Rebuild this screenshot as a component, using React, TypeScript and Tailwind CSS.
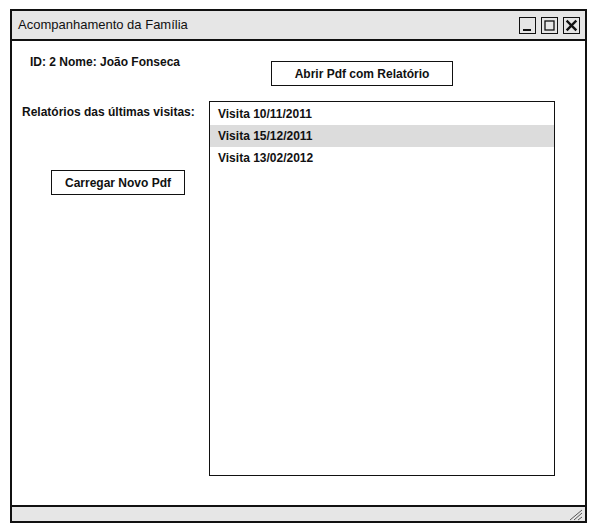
import React from "react";

const visits = ["Visita 10/11/2011", "Visita 15/12/2011", "Visita 13/02/2012"];

function WinButton({ kind }: { kind: "min" | "max" | "close" }) {
  return (
    <div className="flex size-[17px] items-center justify-center border-[1.5px] border-[#111] bg-[#e6e6e6]">
      <svg width="13" height="13" viewBox="0 0 13 13">
        {kind === "min" && (
          <line x1="2" y1="11" x2="10" y2="11" stroke="#111" strokeWidth="2" />
        )}
        {kind === "max" && (
          <rect x="2" y="2" width="9" height="9" fill="none" stroke="#111" strokeWidth="1.3" />
        )}
        {kind === "close" && (
          <g stroke="#111" strokeWidth="2.4" strokeLinecap="square">
            <line x1="2.5" y1="2.5" x2="10.5" y2="10.5" />
            <line x1="10.5" y1="2.5" x2="2.5" y2="10.5" />
          </g>
        )}
      </svg>
    </div>
  );
}

export default function App() {
  return (
    <div className="h-[526px] w-[590px] bg-white pl-[10px] pt-[9px] font-['Liberation_Sans',Arial,sans-serif] text-[#111]">
      <div className="flex h-[514px] w-[577px] flex-col border-2 border-[#111]">
        {/* title bar */}
        <div className="flex h-[30px] shrink-0 items-center justify-between border-b-2 border-[#111] bg-[#e6e6e6] pl-[6px] pr-[5px]">
          <span className="text-[13px]">Acompanhamento da Família</span>
          <div className="flex gap-[5px]">
            <WinButton kind="min" />
            <WinButton kind="max" />
            <WinButton kind="close" />
          </div>
        </div>

        {/* body */}
        <div className="flex flex-1 flex-col">
          <div className="flex h-[60px] shrink-0 items-start">
            <p className="mt-[12px] w-[259px] pl-[18px] text-[12px] font-bold">
              ID: 2 Nome: João Fonseca
            </p>
            <button
              type="button"
              className="mt-[20px] flex h-[25px] w-[182px] items-center justify-center border-[1.5px] border-[#111] bg-white text-[12px] font-bold"
            >
              Abrir Pdf com Relatório
            </button>
          </div>

          <div className="flex items-start">
            <div className="flex w-[197px] shrink-0 flex-col pl-[10px]">
              <p className="mt-[2px] text-[12px] font-bold">
                Relatórios das últimas visitas:
              </p>
              <button
                type="button"
                className="ml-[29px] mt-[49px] flex h-[25px] w-[134px] items-center justify-center border-[1.5px] border-[#111] bg-white text-[12px] font-bold"
              >
                Carregar Novo Pdf
              </button>
            </div>
            <ul className="h-[375px] w-[346px] border-[1.5px] border-[#111]">
              {visits.map((v, i) => (
                <li
                  key={v}
                  className={`flex items-center pl-[8px] text-[12px] font-bold ${
                    i === 0 ? "h-[23px]" : "h-[22px]"
                  } ${i === 1 ? "bg-[#dcdcdc]" : ""}`}
                >
                  {v}
                </li>
              ))}
            </ul>
          </div>
        </div>

        {/* status bar */}
        <div className="flex h-[16px] shrink-0 items-center justify-end border-t-2 border-[#111] bg-[#e6e6e6] pr-[2px]">
          <svg width="16" height="13" viewBox="0 0 16 13">
            <g stroke="#555" strokeWidth="1">
              <line x1="3" y1="12" x2="15" y2="2" />
              <line x1="7" y1="12" x2="15" y2="5" />
              <line x1="11" y1="12" x2="15" y2="9" />
            </g>
          </svg>
        </div>
      </div>
    </div>
  );
}
